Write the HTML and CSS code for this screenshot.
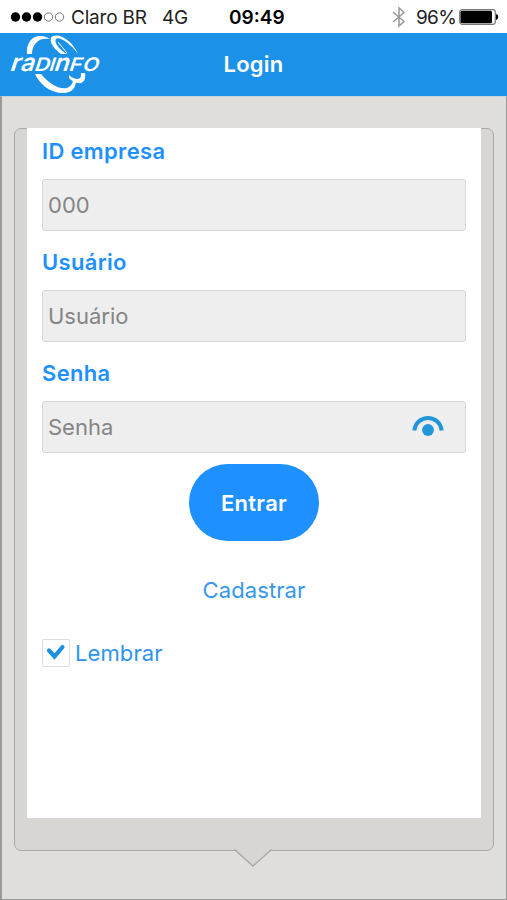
FILE: index.html
```html
<!DOCTYPE html>
<html lang="pt-BR">
<head>
<meta charset="utf-8">
<title>Login</title>
<link rel="stylesheet" href="styles.css">
</head>
<body>
<div class="status">
  <svg class="signal" width="55" height="12" viewBox="0 0 55 12">
    <circle cx="5.5" cy="6" r="4.7"/><circle cx="16.5" cy="6" r="4.7"/><circle cx="27.5" cy="6" r="4.7"/>
    <circle class="off" cx="38.5" cy="6" r="4.2"/><circle class="off" cx="49.5" cy="6" r="4.2"/>
  </svg>
  <span class="carrier">Claro BR</span>
  <span class="network">4G</span>
  <span class="time">09:49</span>
  <svg class="bluetooth" width="14" height="22" viewBox="0 0 14 22"><path d="M1 6 12 15.5 7 20V2l5 4.5L1 16"/></svg>
  <span class="percent">96%</span>
  <svg class="battery" width="40" height="16" viewBox="0 0 40 16">
    <rect x=".7" y=".7" width="35.6" height="14.6" rx="2.5" fill="#fff" stroke="#777" stroke-width="1.2"/>
    <rect x="1.5" y="1.7" width="31.5" height="12.6" rx="1.5"/><path d="M37 5q2.3.5 2.3 3T37 11z"/>
  </svg>
</div>
<header class="bar">
  <svg class="logo" width="94" height="60" viewBox="0 0 94 60">
    <path d="M17 20C16 9 22 2 30 2c4 0 7 1 10 3-6-1-11 0-14 4-3 3-4 7-4 11z"/>
    <path d="M51 20C41 13 38 4 43 2c8-3 20 6 25 18C60 9 49 2 46 5c-2 3 2 10 11 15z"/>
    <path d="M48 8l9 11" class="ray"/>
    <path d="M25 40h6c10 12 22 17 28 13 3-2 4-5 4-7h3c0 8-4 13-13 13-12 0-23-8-28-19z"/>
    <path d="M59 41c4 4 9 5 11 3 1-1 1-3 1-5h4c1 6-1 9-4 10-5 1-9-2-12-5z"/>
    <g class="wordmark" transform="translate(0 36.5) skewX(-18)">
      <text transform="translate(-1 0) scale(1.3 1.22)">r</text>
      <text transform="translate(9.5 0) scale(1.2 1.22)">a</text>
      <text transform="translate(23.5 0) scale(1.05 .93)">D</text>
      <text transform="translate(38 0) scale(1 .93)">I</text>
      <text transform="translate(43 0) scale(1.23 1.22)">n</text>
      <text transform="translate(58 0) scale(1.1 .93)">F</text>
      <text transform="translate(71.5 0) scale(1.05 .93)">O</text>
    </g>
  </svg>
  <h1>Login</h1>
</header>
<main class="page">
  <div class="panel">
    <form class="card">
      <label class="label" for="company">ID empresa</label>
      <div class="field"><input id="company" type="text" placeholder="000"></div>
      <label class="label" for="user">Usuário</label>
      <div class="field"><input id="user" type="text" placeholder="Usuário"></div>
      <label class="label" for="pass">Senha</label>
      <div class="field"><input id="pass" type="password" placeholder="Senha">
        <svg class="eye" width="32" height="22" viewBox="0 0 32 22"><path d="M2.3 15.5C4.5-1.2 27.5-1.2 29.7 15.5" fill="none" stroke="#2196d8" stroke-width="4"/><circle cx="16" cy="15" r="5.9" fill="#2196d8"/></svg>
      </div>
      <button class="enter" type="button">Entrar</button>
      <a class="register">Cadastrar</a>
      <div class="remember">
        <span class="check"><svg width="20" height="18" viewBox="0 0 20 18"><path d="m3 6.5 5.5 6L16.5 3"/></svg></span>
        <span class="remember-text">Lembrar</span>
      </div>
    </form>
    <svg class="tail" width="40" height="19" viewBox="0 0 40 19"><path d="M0 0H2L20 17 38 0H40" fill="#d7d6d2"/><path d="M1.5.5 20 17 38.5.5" fill="none" stroke="#aaa9a6" stroke-width="1.4"/></svg>
  </div>
</main>
</body>
</html>
```

FILE: styles.css
```css
* { box-sizing: border-box; }
body { margin: 0; width: 507px; height: 900px; overflow: hidden; background: #fff; font-family: Inter, "Liberation Sans", sans-serif; font-size: 22px; }
.status { height: 33px; display: flex; align-items: center; padding: 2px 0 0 10px; font-size: 19px; color: #222; white-space: nowrap; }
.status svg { flex: none; }
.signal { fill: #000; position: relative; top: -1px; }
.signal .off { fill: none; stroke: #777; }
.carrier { width: 76px; margin-left: 6px; letter-spacing: -.2px; }
.network { width: 26px; margin-left: 15px; letter-spacing: -.2px; }
.time { width: 56px; margin-left: 41px; font-weight: 600; color: #000; }
.bluetooth { margin-left: 107px; fill: none; stroke: #999; stroke-width: 1.5; position: relative; top: -1px; }
.percent { width: 40px; margin-left: 10px; letter-spacing: -.7px; }
.battery { margin-left: 3px; position: relative; top: -1px; }
.bar { height: 63px; background: #1b92e8; position: relative; display: flex; justify-content: center; align-items: center; padding-bottom: 2px; }
.logo { position: absolute; left: 10px; top: 1px; fill: #fff; overflow: visible; }
.ray { fill: none; stroke: #fff; stroke-width: 1; }
.wordmark { font-family: Inter, sans-serif; font-weight: 600; font-size: 20px; }
h1 { margin: 0; font-size: 22px; font-weight: 600; color: #fff; letter-spacing: .2px; }
.page { height: 804px; padding: 31px 12px 0 12px; background: #dfdedb; border: solid #999; border-width: 1px 1px 1px 2px; border-top-color: #c9d3d8; }
.panel { position: relative; height: 723px; padding: 0 12px; background: #d7d6d2; border: 1px solid #aaa9a6; border-radius: 7px; }
.card { height: 690px; margin-top: -1px; padding: 9px 15px 0; background: #fff; display: flex; flex-direction: column; }
.label { height: 28px; line-height: 28px; font-weight: 600; color: #1e90ff; letter-spacing: .33px; margin-bottom: 14px; }
.field { height: 52px; margin-bottom: 17px; display: flex; align-items: center; border: 1px solid #d6d6d6; border-radius: 3px; background: #eee; }
input { flex: 1; min-width: 0; height: 48px; padding: 0 0 0 5px; border: 0; background: transparent; font: inherit; outline: none; }
input::placeholder { color: #858585; }
.eye { margin-right: 21px; position: relative; top: -1px; }
.enter { align-self: center; width: 130px; height: 77px; margin-top: -6px; border: 0; border-radius: 39px; background: #1e90ff; color: #fff; font: inherit; font-weight: 600; letter-spacing: .3px; }
.register { align-self: center; margin-top: 35px; line-height: 28px; color: #3797ec; letter-spacing: .1px; }
.remember { display: flex; align-items: center; height: 28px; margin-top: 35px; color: #2e94f0; }
.check { width: 28px; height: 28px; display: grid; place-items: center; border: 1px solid #ddd; border-radius: 2px; }
.check path { fill: none; stroke: #1e90e0; stroke-width: 4.2; stroke-linecap: round; }
.remember-text { margin-left: 5px; letter-spacing: .1px; }
.tail { position: absolute; left: 218px; top: 720px; }
```
